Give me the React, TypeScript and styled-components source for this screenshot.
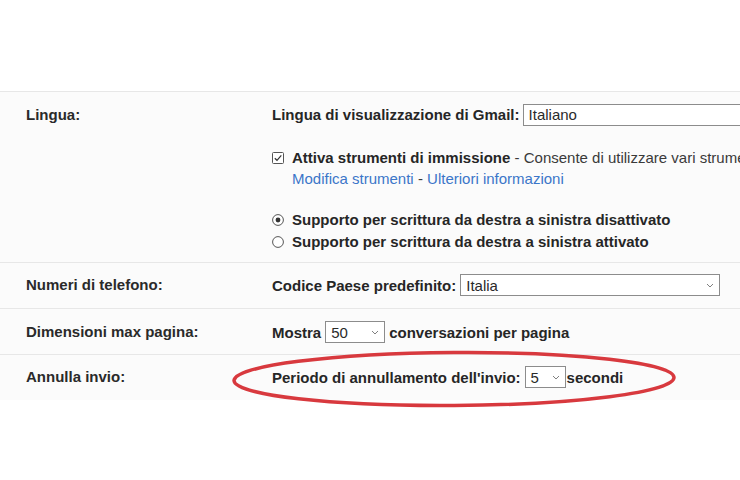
import styled, { createGlobalStyle } from "styled-components";

const GlobalStyle = createGlobalStyle`
  html, body {
    margin: 0;
    padding: 0;
    background: #ffffff;
  }
  body {
    font-family: "Liberation Sans", Arial, sans-serif;
    color: #222222;
    overflow: hidden;
  }
`;

const Page = styled.div`
  width: 740px;
  height: 480px;
  overflow: hidden;
  box-sizing: border-box;
  padding-top: 91px;
  background: #ffffff;
`;

const Table = styled.div`
  background: #fbfbfb;
`;

const Row = styled.div<{ $pad: string; $align: string }>`
  position: relative;
  display: grid;
  grid-template-columns: 246px 1fr;
  align-items: ${({ $align }) => $align};
  padding: ${({ $pad }) => $pad};
  padding-left: 26px;
  border-top: 1px solid #e7e7e7;
  white-space: nowrap;
`;

const Label = styled.div`
  font-size: 15px;
  font-weight: 700;
  line-height: 22px;
  color: #2a2a2a;
`;

const Cell = styled.div`
  display: flex;
  flex-direction: column;
  min-width: 0;
`;

const Line = styled.div<{ $gap?: number }>`
  display: flex;
  align-items: center;
  gap: 5px;
  height: 21px;
  font-size: 15px;
  line-height: 21px;
  margin-top: ${({ $gap }) => $gap ?? 0}px;
`;

const Inline = styled.div`
  display: flex;
  align-items: center;
  gap: 4px;
  font-size: 15px;
`;

const Strong = styled.span`
  font-weight: 700;
  color: #262626;
`;

const Plain = styled.span`
  font-weight: 400;
  color: #3a3a3a;
`;

const Link = styled.a`
  color: #3b76c9;
  text-decoration: none;
  font-size: 15px;
`;

const Indent = styled.div`
  padding-left: 20px;
  font-size: 15px;
  line-height: 21px;
  color: #3a3a3a;
`;

const SelectBox = styled.div<{ $width: number }>`
  display: flex;
  align-items: center;
  justify-content: space-between;
  box-sizing: border-box;
  width: ${({ $width }) => $width}px;
  height: 22px;
  padding: 0 5px 0 5px;
  background: #ffffff;
  border: 1px solid #8c8c8c;
  font-size: 15px;
  font-weight: 400;
  color: #2a2a2a;
  flex-shrink: 0;
`;

const Chevron = () => (
  <svg width="8" height="5" viewBox="0 0 8 5">
    <path d="M1 1 L4 4 L7 1" fill="none" stroke="#808080" strokeWidth="1" />
  </svg>
);

const Box = styled.span`
  display: inline-flex;
  width: 15px;
  flex-shrink: 0;
`;

const CheckIcon = () => (
  <svg width="12" height="12" viewBox="0 0 12 12">
    <rect x="0.5" y="0.5" width="11" height="11" rx="1" fill="#fff" stroke="#555" strokeWidth="1" />
    <path d="M2.8 6.2 L5 8.3 L9.3 3.4" fill="none" stroke="#333" strokeWidth="1.2" />
  </svg>
);

const RadioIcon = ({ on }: { on?: boolean }) => (
  <svg width="12" height="12" viewBox="0 0 12 12">
    <circle cx="6" cy="6" r="5.4" fill="#fff" stroke="#555" strokeWidth="1" />
    {on && <circle cx="6" cy="6" r="2.4" fill="#333" />}
  </svg>
);

const Mark = styled.svg`
  position: absolute;
  left: 229px;
  top: -10px;
  overflow: visible;
  pointer-events: none;
`;

const Ellipse = () => (
  <Mark width="452" height="66" viewBox="0 0 452 66">
    <ellipse
      cx="225"
      cy="34"
      rx="220"
      ry="26.5"
      fill="none"
      stroke="#d8393e"
      strokeWidth="3.5"
      transform="rotate(-0.4 225 34)"
    />
  </Mark>
);

export default function App() {
  return (
    <>
      <GlobalStyle />
      <Page>
        <Table>
          <Row $pad="12px 0 10px 0" $align="start">
            <Label>Lingua:</Label>
            <Cell>
              <Line>
                <Strong>Lingua di visualizzazione di Gmail:</Strong>
                <SelectBox $width={260} style={{ marginLeft: -2 }}>Italiano</SelectBox>
              </Line>
              <Line $gap={22}>
                <Box>
                  <CheckIcon />
                </Box>
                <span>
                  <Strong>Attiva strumenti di immissione</Strong>
                  <Plain> - Consente di utilizzare vari strumenti</Plain>
                </span>
              </Line>
              <Indent>
                <Link href="#">Modifica strumenti</Link> - <Link href="#">Ulteriori informazioni</Link>
              </Indent>
              <Line $gap={20}>
                <Box>
                  <RadioIcon on />
                </Box>
                <Strong>Supporto per scrittura da destra a sinistra disattivato</Strong>
              </Line>
              <Line $gap={1}>
                <Box>
                  <RadioIcon />
                </Box>
                <Strong>Supporto per scrittura da destra a sinistra attivato</Strong>
              </Line>
            </Cell>
          </Row>

          <Row $pad="11px 0 12px 0" $align="center">
            <Label>Numeri di telefono:</Label>
            <Inline>
              <Strong>Codice Paese predefinito:</Strong>
              <SelectBox $width={260}>
                Italia
                <Chevron />
              </SelectBox>
            </Inline>
          </Row>

          <Row $pad="12px 0 11px 0" $align="center">
            <Label>Dimensioni max pagina:</Label>
            <Inline>
              <Strong>Mostra</Strong>
              <SelectBox $width={60}>
                50
                <Chevron />
              </SelectBox>
              <Strong>conversazioni per pagina</Strong>
            </Inline>
          </Row>

          <Row $pad="11px 0 12px 0" $align="center">
            <Label>Annulla invio:</Label>
            <Inline>
              <Strong>Periodo di annullamento dell'invio:</Strong>
              <SelectBox $width={41}>
                5
                <Chevron />
              </SelectBox>
              <Strong style={{ marginLeft: -3 }}>secondi</Strong>
            </Inline>
            <Ellipse />
          </Row>
        </Table>
      </Page>
    </>
  );
}
